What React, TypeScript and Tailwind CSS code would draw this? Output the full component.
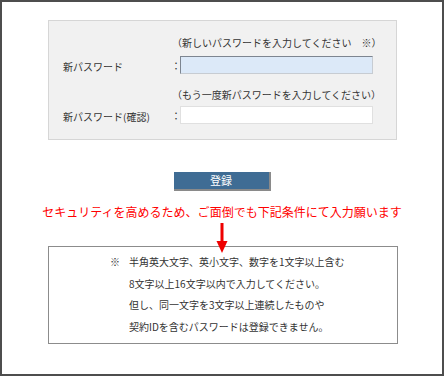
const jp = "font-['Meiryo','Noto_Sans_CJK_JP',sans-serif]";

const notes = [
  "8文字以上16文字以内で入力してください。",
  "但し、同一文字を3文字以上連続したものや",
  "契約IDを含むパスワードは登録できません。",
];

export default function App() {
  return (
    <div className={`${jp} h-[376px] w-[444px] border-2 border-[#4d4d4d] bg-white text-[#333]`}>
      <div className="pl-[46px] pt-[18px]">
        {/* input panel */}
        <div className="w-[349px] border border-[#d6d6d6] bg-[#f1f1f1] pb-[15px] pl-[14px] pt-[15px] text-[10px]">
          <div className="pl-[109px] leading-[14px]">（新しいパスワードを入力してください　※）</div>
          <div className="mt-[6px] flex items-center">
            <span className="w-[108px] pt-[2px]">新パスワード</span>
            <span className="w-[9px]">：</span>
            <div className="h-[18px] w-[193px] border border-[#c7ccd2] border-l-[#7d8590] border-t-[#7d8590] bg-[#dce9f8]" />
          </div>
          <div className="mt-[14px] pl-[109px] leading-[14px]">（もう一度新パスワードを入力してください）</div>
          <div className="mt-[4px] flex items-center">
            <span className="w-[108px] pt-[3px]">新パスワード(確認)</span>
            <span className="w-[9px]">：</span>
            <div className="h-[18px] w-[193px] border border-[#e0e0e0] bg-white" />
          </div>
        </div>
      </div>

      <div className="mt-[32px] flex justify-center">
        <button className="h-[19px] w-[97px] border-b-2 border-r-2 border-b-[#8a8a8a] border-r-[#8a8a8a] bg-[#3f6c94] text-[11px] leading-[17px] text-white">
          登録
        </button>
      </div>

      <p className="mt-[13px] text-center text-[12px] leading-[16px] text-[#ff0000]">
        セキュリティを高めるため、ご面倒でも下記条件にて入力願います
      </p>

      <div className="mt-[3px] flex h-[23px] justify-center">
        <svg width="12" height="30" viewBox="0 0 12 30" className="relative z-10 overflow-visible">
          <rect x="4.5" y="0" width="3" height="20" fill="#ee0000" />
          <polygon points="0.5,18 11.5,18 6,30" fill="#ee0000" />
        </svg>
      </div>

      <div className="ml-[46px] w-[350px] border border-[#8c8c8c] pb-[6px] pl-[61px] pt-[4px] text-[10px] leading-[21.5px]">
        <div className="flex">
          <span className="w-[19px]">※</span>
          <span>半角英大文字、英小文字、数字を1文字以上含む</span>
        </div>
        {notes.map((line) => (
          <div key={line} className="pl-[19px]">
            {line}
          </div>
        ))}
      </div>
    </div>
  );
}
